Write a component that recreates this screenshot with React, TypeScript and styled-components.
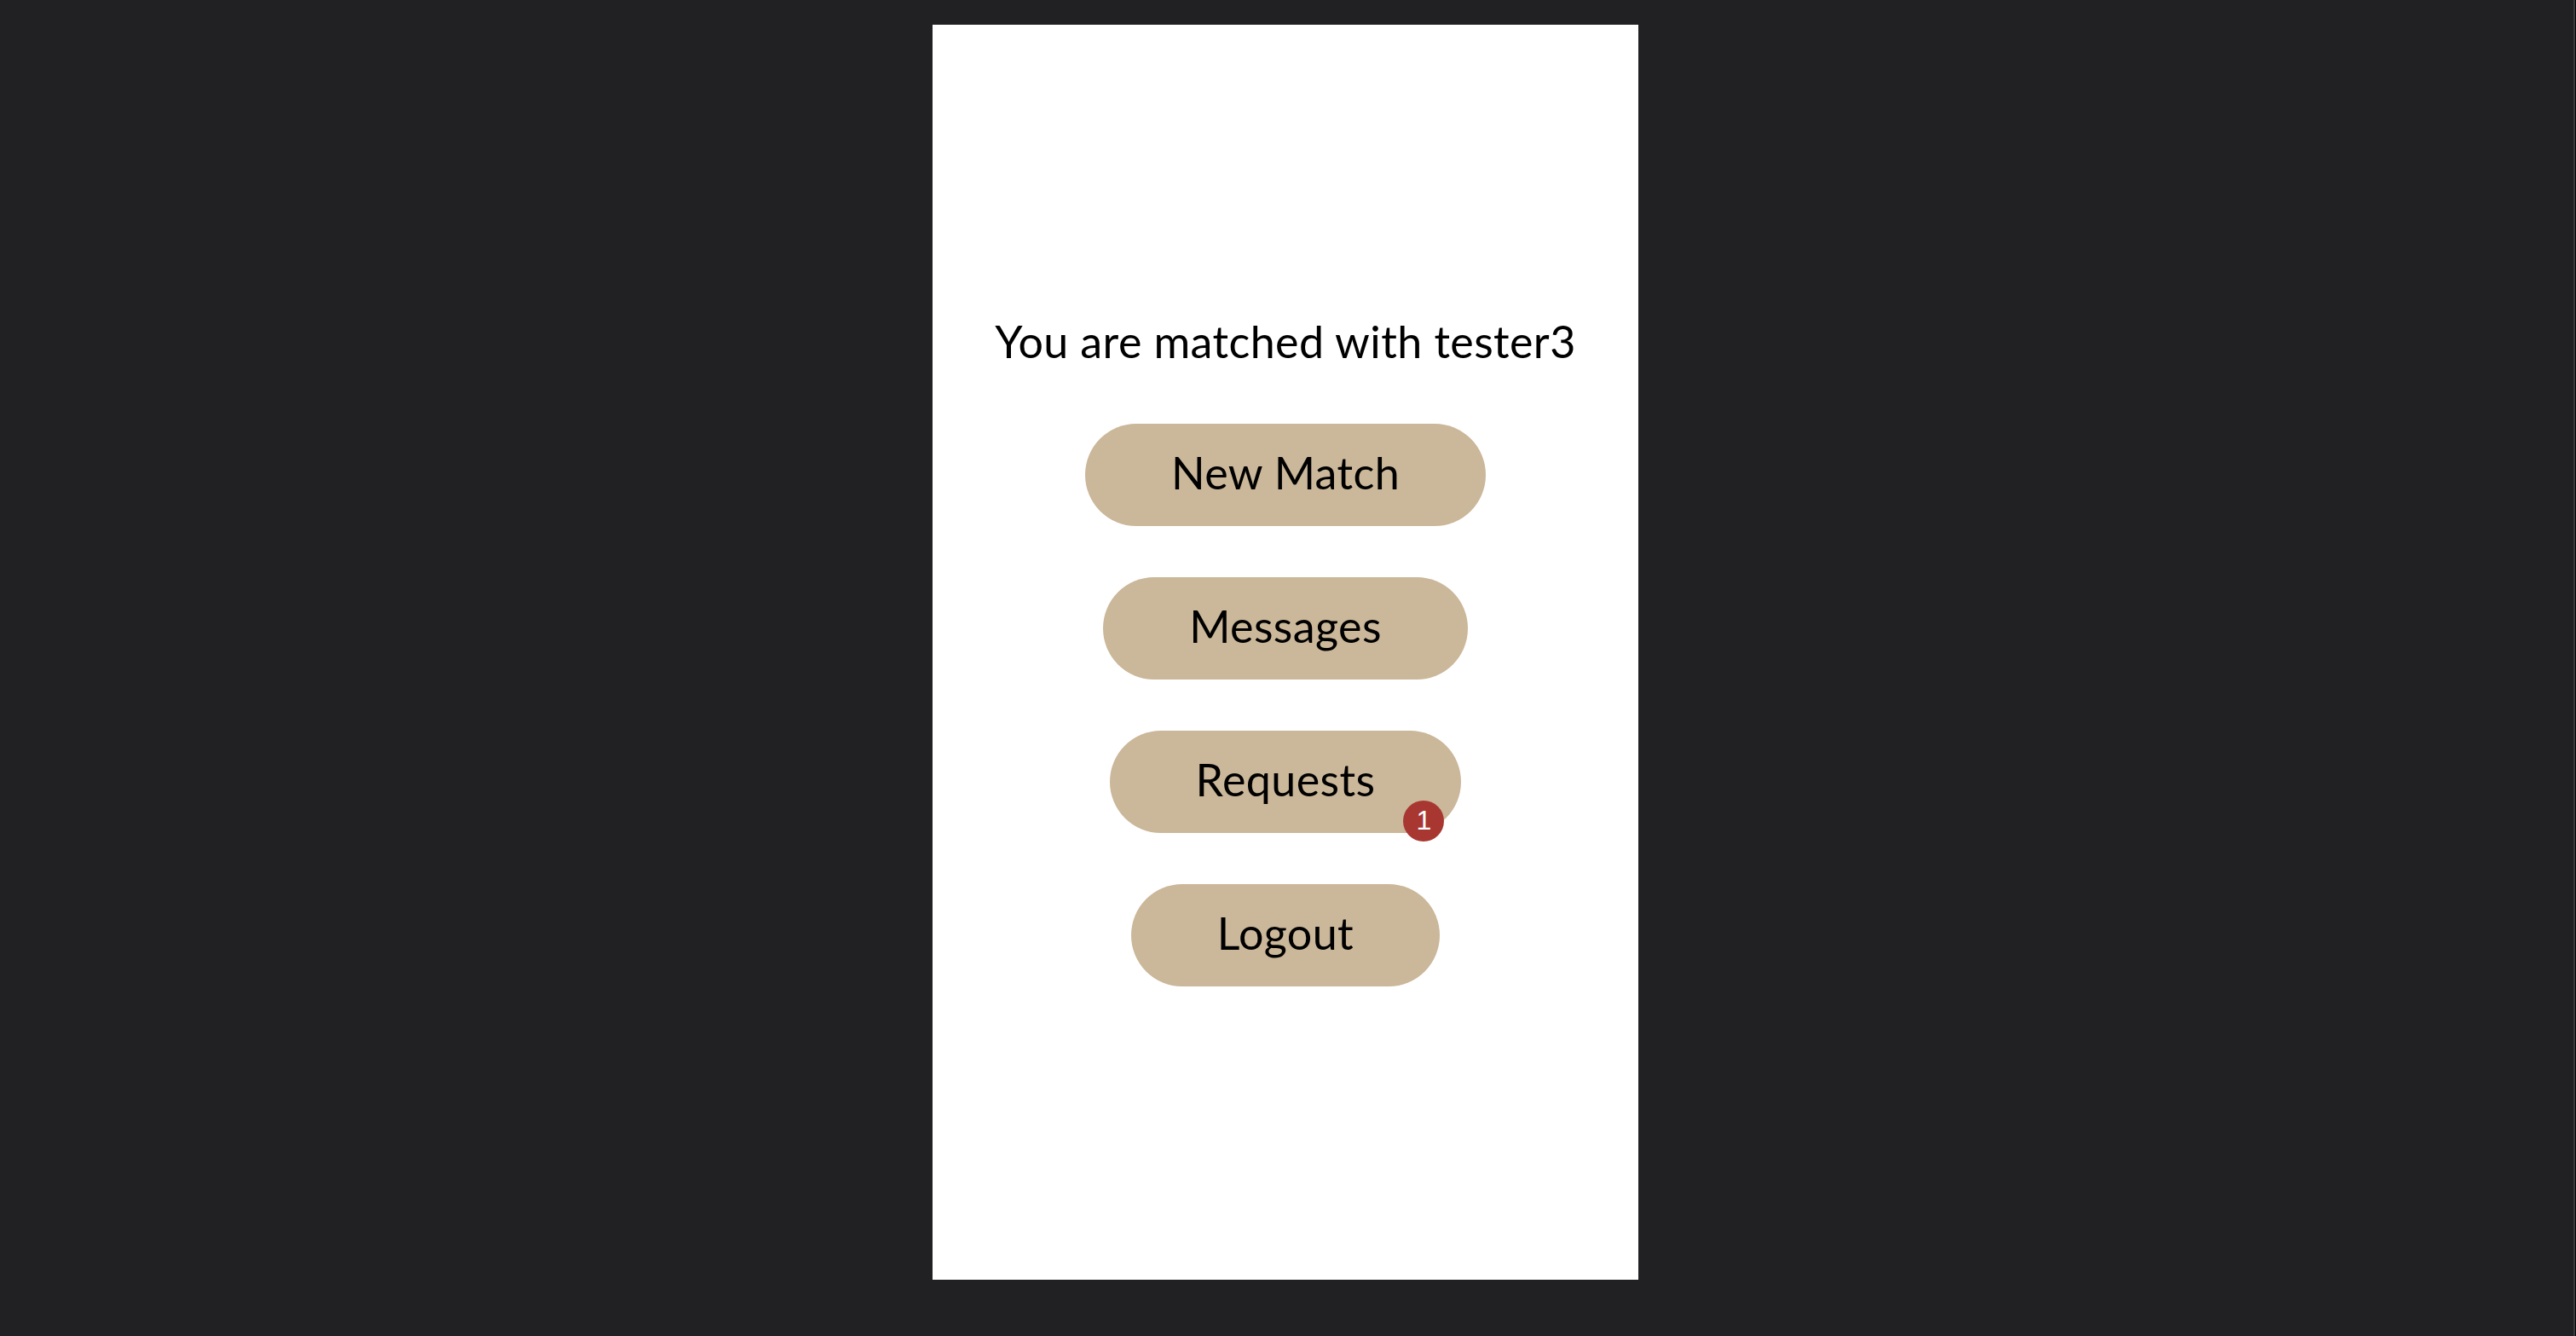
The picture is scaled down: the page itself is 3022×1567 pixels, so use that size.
import React from "react"
import styled, { createGlobalStyle } from "styled-components"

const GlobalStyle = createGlobalStyle`
  html, body {
    margin: 0;
    padding: 0;
    background: #212123;
  }
  #root {
    height: 1567px;
  }
`

const Screen = styled.div`
  display: flex;
  width: 3022px;
  height: 1567px;
  background: #212123;
  overflow: hidden;
`

const Stage = styled.div`
  flex: 1;
  display: flex;
  justify-content: center;
  padding-top: 29px;
`

const EdgeStrip = styled.div`
  width: 6px;
  display: flex;
  background: #212123;
  &::after {
    content: "";
    margin-left: 3px;
    width: 3px;
    border-left: 2px solid #3b3b3d;
    background: #050505;
  }
`

const Phone = styled.main`
  width: 828px;
  height: 1472px;
  background: #ffffff;
  display: flex;
  flex-direction: column;
  align-items: center;
  justify-content: center;
  padding-bottom: 5px;
  box-sizing: border-box;
`

const Title = styled.h1`
  margin: 0 0 66px;
  font-family: Lato, "Open Sans", sans-serif;
  font-weight: 400;
  font-size: 52px;
  line-height: 62px;
  letter-spacing: 0.4px;
  color: #000;
`

const Menu = styled.nav`
  display: flex;
  flex-direction: column;
  align-items: center;
  gap: 60px;
`

const PillButton = styled.button`
  position: relative;
  height: 120px;
  padding: 0 101px 6px;
  border: none;
  border-radius: 60px;
  background: #cbb799;
  color: #000;
  font-family: Lato, "Open Sans", sans-serif;
  font-size: 52px;
  letter-spacing: 0.4px;
  cursor: pointer;
`

const Badge = styled.span`
  position: absolute;
  right: 20px;
  bottom: -10px;
  width: 48px;
  height: 48px;
  border-radius: 50%;
  background: #a83732;
  color: #fff;
  display: flex;
  align-items: center;
  justify-content: center;
  font-family: "Liberation Sans", Arial, sans-serif;
  font-size: 32px;
  letter-spacing: 0;
`

const App = () => {
  const requests = 1

  return (
    <>
      <GlobalStyle />
      <Screen>
        <Stage>
          <Phone>
            <Title>You are matched with tester3</Title>
            <Menu>
              <PillButton>New Match</PillButton>
              <PillButton>Messages</PillButton>
              <PillButton>
                Requests
                {requests > 0 && <Badge>{requests}</Badge>}
              </PillButton>
              <PillButton>Logout</PillButton>
            </Menu>
          </Phone>
        </Stage>
        <EdgeStrip />
      </Screen>
    </>
  )
}

export default App
